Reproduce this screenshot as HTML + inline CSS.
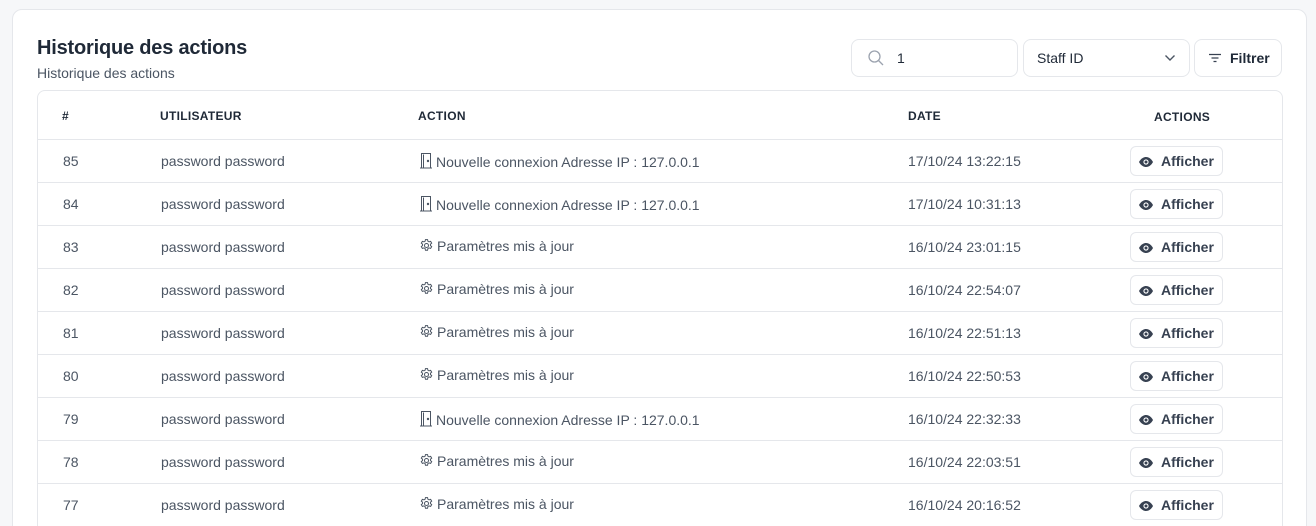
<!DOCTYPE html>
<html><head><meta charset="utf-8">
<style>
*{box-sizing:border-box;margin:0;padding:0}
html{height:526px;overflow:hidden}
body{width:1316px;height:526px;overflow:hidden;background:#f6f7f9;font-family:"Liberation Sans",sans-serif;color:#4b5563;position:relative}
.card{position:absolute;left:12px;top:9px;width:1295px;height:530px;background:#fff;border:1px solid #e5e7eb;border-radius:10px}
h1{position:absolute;left:37px;top:37px;font-size:20px;font-weight:bold;color:#1f2937;letter-spacing:-0.2px}
.sub{position:absolute;left:37px;top:65px;font-size:14px;color:#4b5563}
.box{position:absolute;top:39px;height:38px;border:1px solid #e5e7eb;border-radius:8px;background:#fff;font-size:14px;color:#1f2937;display:flex;align-items:center}
.tbl{position:absolute;left:37px;top:90px;width:1246px;height:450px;border:1px solid #e5e7eb;border-radius:8px;overflow:hidden}
.row{position:absolute;left:0;width:100%;height:43px;border-top:1px solid #e5e7eb;font-size:14px}
.row span,.hd span{position:absolute;white-space:nowrap}
.hd{position:absolute;left:0;top:0;width:100%;height:48px;font-size:12px;font-weight:bold;color:#1f2937;letter-spacing:0.3px}
.btn{position:absolute;left:1092px;top:6px;width:93px;height:30px;border:1px solid #e5e7eb;border-radius:6px;font-weight:bold;color:#374151;font-size:14px}
.ic{display:inline-block;vertical-align:-2px;margin-right:3px}
</style></head><body>
<div class="card"></div>
<h1>Historique des actions</h1>
<div class="sub">Historique des actions</div>
<div class="box" style="left:851px;width:167px">
<svg style="margin-left:15px" width="18" height="18" viewBox="0 0 18 18" fill="none" stroke="#9ca3af" stroke-width="1.3"><circle cx="7.5" cy="7.5" r="5.5"/><path d="M11.5 11.5L16 16"/></svg>
<span style="margin-left:12px">1</span></div>
<div class="box" style="left:1023px;width:167px"><span style="margin-left:13px">Staff ID</span>
<svg style="position:absolute;right:13px" width="12" height="8" viewBox="0 0 12 8" fill="none" stroke="#4b5563" stroke-width="1.4"><path d="M1.5 1.5L6 6l4.5-4.5"/></svg></div>
<div class="box" style="left:1194px;width:88px;font-weight:bold">
<svg style="margin-left:13px" width="14" height="12" viewBox="0 0 14 12" stroke="#374151" stroke-width="1.3"><path d="M1 2.5h12M3.5 6h7M5.5 9.5h3"/></svg>
<span style="margin-left:8px">Filtrer</span></div>
<div class="tbl">
<div class="hd"><span style="left:24px;top:18px">#</span><span style="left:122px;top:18px">UTILISATEUR</span><span style="left:380px;top:18px">ACTION</span><span style="left:870px;top:18px">DATE</span><span style="left:1116px;top:19px">ACTIONS</span></div>
</div>
<script>
var d=[["85",1,"17/10/24 13:22:15"],["84",1,"17/10/24 10:31:13"],["83",0,"16/10/24 23:01:15"],["82",0,"16/10/24 22:54:07"],["81",0,"16/10/24 22:51:13"],["80",0,"16/10/24 22:50:53"],["79",1,"16/10/24 22:32:33"],["78",0,"16/10/24 22:03:51"],["77",0,"16/10/24 20:16:52"]];
var door='<svg class="ic" width="14" height="17" viewBox="0 0 14 17" fill="none" stroke="#4b5563" stroke-width="1"><path d="M2.5 16V1.5h9V16M1 16h12M4.5 2.5v13.5"/><circle cx="9" cy="9" r=".7" fill="#4b5563"/></svg>';
var gear='<svg class="ic" width="15" height="15" viewBox="0 0 24 24" fill="none" stroke="#4b5563" stroke-width="1.6"><path d="M10.3 2.5h3.4l.5 2.6 1.9 1.1 2.5-.9 1.7 2.9-2 1.7v2.2l2 1.7-1.7 2.9-2.5-.9-1.9 1.1-.5 2.6h-3.4l-.5-2.6-1.9-1.1-2.5.9-1.7-2.9 2-1.7v-2.2l-2-1.7 1.7-2.9 2.5.9 1.9-1.1z"/><circle cx="12" cy="12" r="3.2"/></svg>';
var eye='<svg class="ic" style="margin-right:8px;vertical-align:-1px" width="14" height="10" viewBox="0 0 14 10"><path d="M7 0C3.5 0 1 3 0 5c1 2 3.5 5 7 5s6-3 7-5c-1-2-3.5-5-7-5z" fill="#374151"/><circle cx="7" cy="5" r="2.6" fill="#fff"/><circle cx="7" cy="5" r="1.5" fill="#374151"/></svg>';
var t=document.querySelector('.tbl'),h='';
d.forEach(function(r,i){h+='<div class="row" style="top:'+(48+i*43)+'px"><span style="left:25px;top:13px">'+r[0]+'</span><span style="left:123px;top:13px">password password</span><span style="left:381px;top:12px">'+(r[1]?door+'Nouvelle connexion Adresse IP : 127.0.0.1':gear+'Paramètres mis à jour')+'</span><span style="left:870px;top:13px">'+r[2]+'</span><div class="btn"><span style="left:8px;top:6px">'+eye+'Afficher</span></div></div>';});
t.innerHTML+=h;
</script>
</body></html>
